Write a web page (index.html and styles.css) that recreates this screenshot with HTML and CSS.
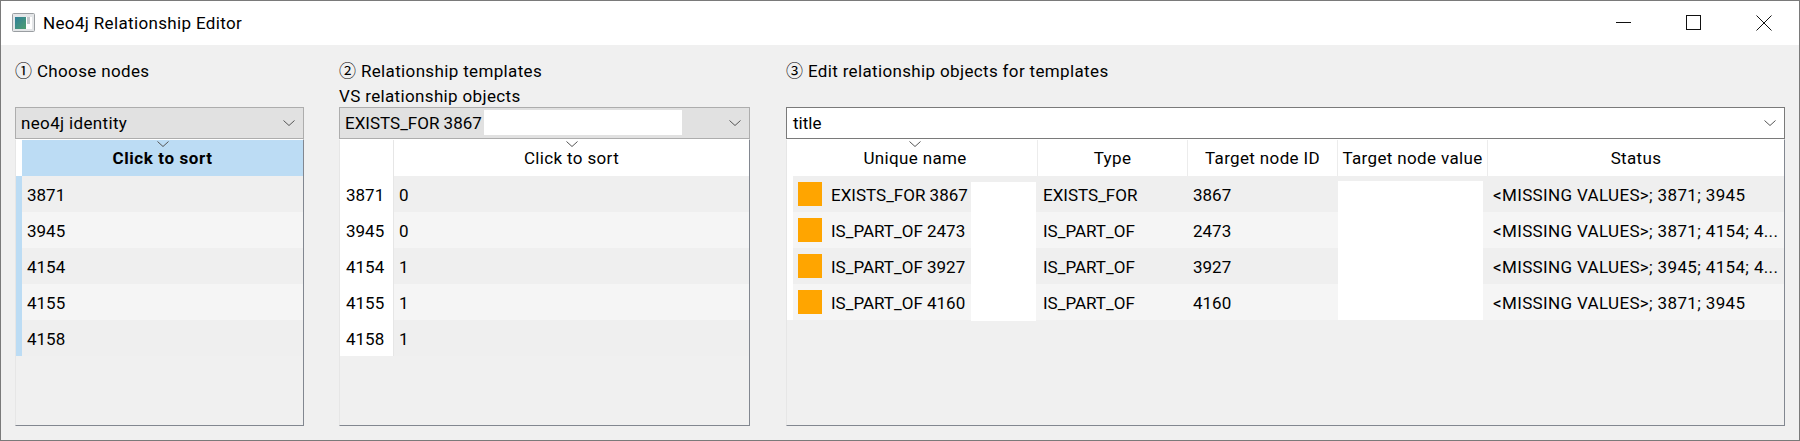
FILE: index.html
```html
<!DOCTYPE html>
<html>

<head>
  <title>Neo4j Relationship Editor</title>
  <link rel="stylesheet" href="styles.css">
</head>

<body>
  <div class="window">
    <header class="titlebar">
      <svg class="app-icon" width="24" height="20" viewBox="0 0 24 20">
        <defs>
          <linearGradient id="iconFill" x1="0" y1="0" x2="1" y2="1">
            <stop offset="0" stop-color="#2f7f9a" />
            <stop offset="1" stop-color="#4f9f6f" />
          </linearGradient>
        </defs>
        <rect x="0.5" y="0.5" width="22" height="18" rx="1" fill="#e4e6e8" stroke="#9a9ea2" />
        <rect x="3" y="4" width="17" height="12" fill="#fff" />
        <rect x="3" y="4" width="11" height="12" fill="url(#iconFill)" />
        <rect x="15" y="4" width="3" height="7" fill="#c4c8cc" />
      </svg>
      <span class="title-text">Neo4j Relationship Editor</span>
      <div class="caption">
        <button class="caption-btn">
          <svg width="16" height="16" viewBox="0 0 16 16"><path d="M0 7.5H15" stroke="#111" fill="none" /></svg>
        </button>
        <button class="caption-btn">
          <svg width="16" height="16" viewBox="0 0 16 16"><rect x="0.5" y="0.5" width="14" height="14" stroke="#111" fill="none" /></svg>
        </button>
        <button class="caption-btn">
          <svg width="16" height="16" viewBox="0 0 16 16"><path d="M0.5 0.5L15.5 15.5M15.5 0.5L0.5 15.5" stroke="#111" fill="none" /></svg>
        </button>
      </div>
    </header>

    <main class="content">
      <section class="panel">
        <div class="panel-label">① Choose nodes</div>
        <div class="combo combo-gray">
          <span class="wide-text">neo4j identity</span>
          <svg class="chevron" width="12" height="6" viewBox="0 0 12 6"><path d="M0.5 0.5L6 5.5L11.5 0.5" /></svg>
        </div>
        <div class="grid-box">
          <table class="grid nodes-grid">
            <colgroup>
              <col class="col-bar">
              <col>
            </colgroup>
            <thead>
              <tr>
                <th class="corner"></th>
                <th class="selected-head">
                  <svg class="sort-mark" width="12" height="6" viewBox="0 0 12 6"><path d="M0.5 0.5L6 5.5L11.5 0.5" /></svg>
                  Click to sort
                </th>
              </tr>
            </thead>
            <tbody>
              <tr><td class="bar"></td><td>3871</td></tr>
              <tr><td class="bar"></td><td>3945</td></tr>
              <tr><td class="bar"></td><td>4154</td></tr>
              <tr><td class="bar"></td><td>4155</td></tr>
              <tr><td class="bar"></td><td>4158</td></tr>
            </tbody>
          </table>
        </div>
      </section>

      <section class="panel">
        <div class="panel-label">② Relationship templates<br>VS relationship objects</div>
        <div class="combo combo-gray">
          <span>EXISTS_FOR 3867</span>
          <span class="redact redact-combo"></span>
          <svg class="chevron" width="12" height="6" viewBox="0 0 12 6"><path d="M0.5 0.5L6 5.5L11.5 0.5" /></svg>
        </div>
        <div class="grid-box">
          <table class="grid templates-grid">
            <colgroup>
              <col class="col-rowhead">
              <col>
            </colgroup>
            <thead>
              <tr>
                <th class="corner rowhead"></th>
                <th>
                  <svg class="sort-mark" width="12" height="6" viewBox="0 0 12 6"><path d="M0.5 0.5L6 5.5L11.5 0.5" /></svg>
                  Click to sort
                </th>
              </tr>
            </thead>
            <tbody>
              <tr><td class="rowhead">3871</td><td>0</td></tr>
              <tr><td class="rowhead">3945</td><td>0</td></tr>
              <tr><td class="rowhead">4154</td><td>1</td></tr>
              <tr><td class="rowhead">4155</td><td>1</td></tr>
              <tr><td class="rowhead">4158</td><td>1</td></tr>
            </tbody>
          </table>
        </div>
      </section>

      <section class="panel panel-wide">
        <div class="panel-label">③ Edit relationship objects for templates</div>
        <div class="combo combo-white">
          <span>title</span>
          <svg class="chevron" width="12" height="6" viewBox="0 0 12 6"><path d="M0.5 0.5L6 5.5L11.5 0.5" /></svg>
        </div>
        <div class="grid-box">
          <table class="grid objects-grid">
            <colgroup>
              <col class="col-strip">
              <col class="col-name">
              <col class="col-std">
              <col class="col-std">
              <col class="col-std">
              <col>
            </colgroup>
            <thead>
              <tr>
                <th class="corner"></th>
                <th class="sep">
                  <svg class="sort-mark" width="12" height="6" viewBox="0 0 12 6"><path d="M0.5 0.5L6 5.5L11.5 0.5" /></svg>
                  Unique name
                </th>
                <th class="sep">Type</th>
                <th class="sep">Target node ID</th>
                <th class="sep">Target node value</th>
                <th>Status</th>
              </tr>
            </thead>
            <tbody>
              <tr>
                <td class="strip"></td>
                <td><div class="name-cell"><span class="swatch"></span>EXISTS_FOR 3867</div></td>
                <td>EXISTS_FOR</td>
                <td>3867</td>
                <td></td>
                <td class="wide-text">&lt;MISSING VALUES&gt;; 3871; 3945</td>
              </tr>
              <tr>
                <td class="strip"></td>
                <td><div class="name-cell"><span class="swatch"></span>IS_PART_OF 2473</div></td>
                <td>IS_PART_OF</td>
                <td>2473</td>
                <td></td>
                <td class="wide-text">&lt;MISSING VALUES&gt;; 3871; 4154; 4...</td>
              </tr>
              <tr>
                <td class="strip"></td>
                <td><div class="name-cell"><span class="swatch"></span>IS_PART_OF 3927</div></td>
                <td>IS_PART_OF</td>
                <td>3927</td>
                <td></td>
                <td class="wide-text">&lt;MISSING VALUES&gt;; 3945; 4154; 4...</td>
              </tr>
              <tr>
                <td class="strip"></td>
                <td><div class="name-cell"><span class="swatch"></span>IS_PART_OF 4160</div></td>
                <td>IS_PART_OF</td>
                <td>4160</td>
                <td></td>
                <td class="wide-text">&lt;MISSING VALUES&gt;; 3871; 3945</td>
              </tr>
            </tbody>
          </table>
          <span class="redact redact-name"></span>
          <span class="redact redact-value"></span>
        </div>
      </section>
    </main>
  </div>
</body>

</html>
```

FILE: styles.css
```css
* {
  box-sizing: border-box;
}

html,
body {
  margin: 0;
  padding: 0;
  height: 100%;
  overflow: hidden;
}

body {
  font-family: Roboto, 'Noto Sans CJK JP', sans-serif;
  font-size: 17px;
  color: #000;
}

.title-text,
.panel-label,
.wide-text,
.grid th {
  letter-spacing: 0.35px;
}

.window {
  display: flex;
  flex-direction: column;
  height: 441px;
  border: 1px solid #7a7a7a;
  background-color: #f0f0f0;
}

/* title bar */
.titlebar {
  display: flex;
  align-items: center;
  flex: 0 0 44px;
  padding-left: 11px;
  background-color: #fff;
}

.app-icon {
  margin-right: 7px;
}

.caption {
  display: flex;
  margin-left: auto;
  height: 100%;
}

.caption-btn {
  display: flex;
  align-items: center;
  justify-content: center;
  width: 70px;
  height: 100%;
  padding: 0;
  border: none;
  background-color: transparent;
}

/* three panels */
.content {
  display: grid;
  grid-template-columns: 289px 411px 1000px;
  column-gap: 35px;
  flex: 1;
  padding: 0 13px 14px 14px;
}

.panel {
  display: flex;
  flex-direction: column;
  min-height: 0;
}

.panel-wide {
  margin-left: 1px;
}

.panel-label {
  flex: 0 0 62px;
  min-height: 0;
  padding-top: 14px;
  line-height: 25px;
}

.combo {
  position: relative;
  display: flex;
  align-items: center;
  justify-content: space-between;
  flex: 0 0 32px;
  padding: 0 8px 0 5px;
  border: 1px solid #adadad;
}

.combo-gray {
  background-color: #e1e1e1;
}

.combo-white {
  padding-left: 6px;
  border-color: #7a7a7a;
  background-color: #fff;
}

.chevron,
.sort-mark {
  fill: none;
  stroke: #555;
}

.grid-box {
  position: relative;
  flex: 1;
  border: 1px solid #828790;
  border-top-color: #fff;
  border-left-color: #e6e6e6;
  background-color: #f0f0f0;
}

/* tables */
.grid {
  width: 100%;
  border-collapse: separate;
  border-spacing: 0;
  table-layout: fixed;
  line-height: 20px;
}

.grid th {
  position: relative;
  height: 36px;
  padding: 0 0 1px;
  background-color: #fff;
  font-weight: normal;
  text-align: center;
  white-space: nowrap;
}

.grid th.sep {
  border-right: 1px solid #ececec;
}

.grid td {
  height: 36px;
  padding: 2px 5px 0;
  white-space: nowrap;
  overflow: hidden;
}

.grid tbody tr:nth-child(odd) td {
  background-color: #efefef;
}

.grid tbody tr:nth-child(even) td {
  background-color: #f5f5f5;
}

.sort-mark {
  position: absolute;
  top: 1px;
  left: 50%;
  margin-left: -6px;
}

.grid .selected-head {
  background-color: #bcdcf4;
  font-weight: bold;
  letter-spacing: 0.6px;
}

.col-bar,
.col-strip {
  width: 6px;
}

.grid tbody tr td.bar {
  padding: 0;
  background-color: #bcdcf4;
}

.grid tbody tr td.strip {
  padding: 0;
  background-color: #fff;
}

.col-rowhead {
  width: 54px;
}

.grid tbody tr td.rowhead {
  padding-left: 6px;
  background-color: #fff;
  border-right: 1px solid #e6e6e6;
}

.grid th.rowhead {
  border-right: 1px solid #e6e6e6;
}

.col-name {
  width: 245px;
}

.col-std {
  width: 150px;
}

.name-cell {
  display: flex;
  align-items: center;
}

.swatch {
  flex: 0 0 24px;
  height: 24px;
  margin-top: -2px;
  margin-right: 9px;
  background-color: #ffa500;
}

/* blanked out values */
.redact {
  position: absolute;
  background-color: #fff;
}

.redact-combo {
  left: 144px;
  top: 2px;
  width: 198px;
  height: 25px;
}

.redact-name {
  left: 184px;
  top: 42px;
  width: 65px;
  height: 139px;
}

.redact-value {
  left: 551px;
  top: 41px;
  width: 145px;
  height: 139px;
}
```
